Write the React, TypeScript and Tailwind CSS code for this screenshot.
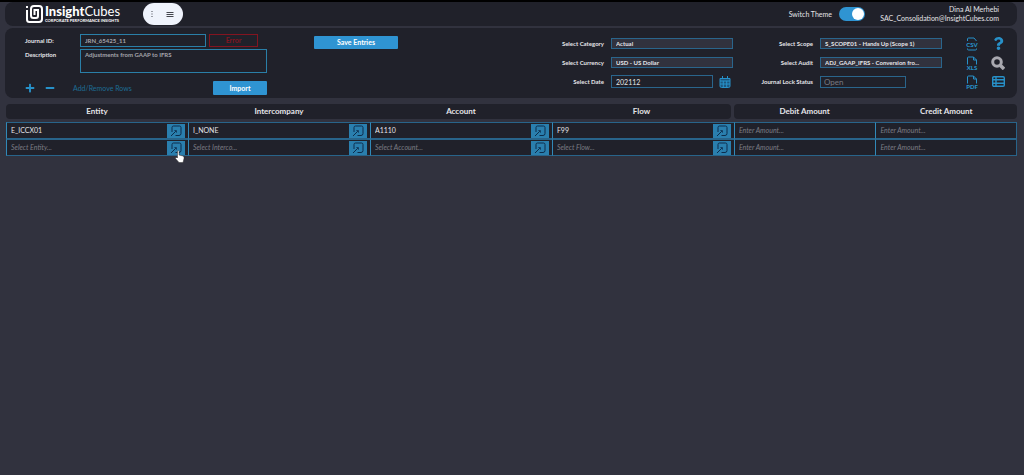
import { useState } from "react";
import type { ReactNode } from "react";
import { FaMinus, FaPlus, FaQuestion } from "react-icons/fa";

const lookupColumns = [
  { name: "Entity", placeholder: "Select Entity...", value: "E_ICCX01" },
  { name: "Intercompany", placeholder: "Select Interco...", value: "I_NONE" },
  { name: "Account", placeholder: "Select Account...", value: "A1110" },
  { name: "Flow", placeholder: "Select Flow...", value: "F99" },
];

const amountColumns = ["Debit Amount", "Credit Amount"];

function Logo() {
  return (
    <a href="#home" aria-label="InsightCubes" className="flex w-[96px] items-center gap-[2px] text-white">
      <svg viewBox="0 0 18 18" className="size-[18px] shrink-0" fill="none" stroke="currentColor">
        <path strokeWidth="2" d="M2 5v9.500q0 2.500 2.500 2.500H14q3 0 3-3V4q0-3-3-3H9Q6 1 6 4v6.500q0 2.500 2.500 2.500H11q2 0 2-2V5H9.500v5" />
        <path strokeWidth="2" d="M1 2h2" />
      </svg>
      <div className="flex flex-col">
        <span className="text-[13px] leading-[13px]">
          <b className="font-black">Insight</b>Cubes
        </span>
        <span className="text-[4px] leading-[5px] font-bold whitespace-nowrap">
          CORPORATE PERFORMANCE INSIGHTS
        </span>
      </div>
    </a>
  );
}

function LookupIcon() {
  return (
    <svg viewBox="0 0 12 12" className="size-3" fill="none" stroke="#0c2d4c">
      <path d="M2 7V2.500Q2 1 3.500 1H9.500q1.500 0 1.500 1.500v6q0 2-2 2H5.500" />
      <path d="M1 11l4.500-4.500" />
      <path fill="#0c2d4c" strokeWidth="0.500" d="M4.500 5.500h2v2z" />
    </svg>
  );
}

function FileIcon({ label }: { label: string }) {
  const isCsv = label === "CSV";
  return (
    <svg viewBox="0 0 12 14" className="h-[14px] w-3" fill="none" stroke="#2791c9">
      <path d={isCsv ? "M1.500 4V2q0-1 1-1h5.500l2.500 3" : "M1.500 8.500V2q0-1 1-1h5l3 3v4.500M7.500 1v3h3"} />
      {isCsv && <path d="M1.500 11.500v0.500q0 1 1 1h7q1 0 1-1v-0.500" />}
      <text
        x="6"
        y={isCsv ? 10 : 14}
        textAnchor="middle"
        fill="#2791c9"
        stroke="none"
        className="text-[6px] font-black"
      >
        {label}
      </text>
    </svg>
  );
}

function CalendarIcon() {
  return (
    <svg viewBox="0 0 12 12" className="size-3" fill="none" stroke="#2791c9">
      <path fill="#1d567d" d="M1 2.500h10v7.500q0 1.500-1.500 1.500h-7q-1.500 0-1.500-1.500z" />
      <path d="M1 5h10M1 8h10M4.300 5v6M7.700 5v6M3.500 0v3M8.500 0v3" />
    </svg>
  );
}

function SearchIcon() {
  return (
    <svg viewBox="0 0 14 14" className="size-[14px]" fill="none" stroke="#a9a9b0">
      <circle cx="6" cy="6" r="4.300" strokeWidth="3" />
      <path strokeWidth="3.500" d="M9.500 9.500l3.500 3.500" />
    </svg>
  );
}

function ListIcon() {
  return (
    <svg viewBox="0 0 13 11" className="h-[11px] w-[13px]" fill="none" stroke="#2791c9">
      <rect x="0.700" y="0.700" width="11.600" height="9.600" rx="1.200" strokeWidth="1.400" />
      <path strokeWidth="1.400" d="M1 3.800h11M1 7.200h11M4 1v9" />
    </svg>
  );
}

function Field({ label, id, children }: { label: string; id: string; children: ReactNode }) {
  return (
    <div className="flex h-[19px] items-center justify-end gap-[7px]">
      <label htmlFor={id} className="text-[6px] font-bold whitespace-nowrap">
        {label}
      </label>
      {children}
    </div>
  );
}

function SelectBox({ id, value }: { id: string; value: string }) {
  return (
    <select
      id={id}
      className="h-[11px] w-[122px] appearance-none border border-[#2a658c] bg-[#31323e] pl-1 text-[6px] leading-[9px] font-bold text-[#e4e4e8]"
    >
      <option>{value}</option>
    </select>
  );
}

function Pointer() {
  return (
    <svg viewBox="0 0 10 13" className="pointer-events-none absolute top-[10px] right-[3px] z-10 h-[13px] w-[10px]">
      <path
        fill="#fff"
        stroke="#333"
        strokeWidth="0.500"
        d="M2.500 1q1-1 1.500 0.500V5l4 1q1.500 0.500 1 2.500l-1 4H4L0.500 8.500Q0.500 7 2 7.500l0.500 0.500z"
      />
    </svg>
  );
}

export default function App() {
  const [light, setLight] = useState(true);

  return (
    <div className="min-h-screen border-t-2 border-black bg-[#31323e] pr-[7px] pl-[5px] font-[Lato,sans-serif] text-[#e4e4e8]">
      <header className="flex h-6 items-center rounded-lg bg-[#20212a] pr-[18px] pl-5">
        <Logo />
        <nav className="ml-[22px] flex h-[22px] w-10 items-center justify-between rounded-full bg-[#eff3fc] px-2 text-[#44464f]">
          <button aria-label="More" className="flex">
            <svg viewBox="0 0 2 8" className="h-2 w-[2px]" fill="currentColor">
              <path d="M0.500 1h1v1h-1zM0.500 3.500h1v1h-1zM0.500 6h1v1h-1z" />
            </svg>
          </button>
          <button aria-label="Menu" className="mr-px flex">
            <svg viewBox="0 0 8 7" className="h-[7px] w-2" stroke="currentColor">
              <path d="M0.500 1.500h7M0.500 3.500h7M0.500 5.500h7" />
            </svg>
          </button>
        </nav>
        <label htmlFor="theme" className="ml-auto text-[7px]">
          Switch Theme
        </label>
        <input
          id="theme"
          type="checkbox"
          role="switch"
          checked={light}
          onChange={() => setLight(!light)}
          className="ml-[7px] h-[14px] w-[26px] appearance-none rounded-full bg-[#2f94d2] p-px before:block before:size-3 before:rounded-full before:bg-white checked:before:ml-3"
        />
        <div className="w-[134px] text-right text-[7px] leading-[9px]">
          <p>Dina Al Merhebi</p>
          <p>SAC_Consolidation@InsightCubes.com</p>
        </div>
      </header>

      <section className="mt-[2px] flex h-[70px] rounded-lg bg-[#20212a] pr-3 pl-5">
        <div className="flex w-[242px] flex-col pt-[6px]">
          <div className="flex items-center">
            <label htmlFor="journal" className="w-[55px] text-[6px] font-bold">
              Journal ID:
            </label>
            <input
              id="journal"
              defaultValue="JRN_65425_11"
              className="h-[13px] w-[126px] border border-[#2a7fa8] px-1 text-[6px] font-bold text-[#a4a4aa]"
            />
            <button className="ml-[3px] h-[13px] w-[49px] border border-[#831420] text-[7px] leading-[11px] font-bold text-[#831420]">
              Error
            </button>
          </div>
          <div className="mt-[2px] flex items-start">
            <label htmlFor="description" className="w-[55px] text-[6px] leading-3 font-bold">
              Description
            </label>
            <textarea
              id="description"
              defaultValue="Adjustments from GAAP to IFRS"
              className="h-6 w-[187px] resize-none border border-[#2a7fa8] px-1 text-[6px] leading-[10px] font-bold text-[#a4a4aa]"
            />
          </div>
          <div className="mt-2 flex items-center">
            <button aria-label="Add row" className="text-[10px] text-[#2791c9]">
              <FaPlus />
            </button>
            <button aria-label="Remove row" className="ml-[10px] text-[10px] text-[#2791c9]">
              <FaMinus />
            </button>
            <span className="ml-[18px] text-[7px] text-[#1d6c94]">Add/Remove Rows</span>
            <button className="ml-auto h-[14px] w-[54px] rounded-[1px] bg-[#2f94d2] text-[7px] font-bold text-white">
              Import
            </button>
          </div>
        </div>

        <button className="mt-2 ml-[47px] h-[13px] w-[84px] rounded-[1px] bg-[#2f94d2] text-[7px] font-bold text-white">
          Save Entries
        </button>

        <div className="ml-auto pt-[6px]">
          <Field label="Select Category" id="category">
            <SelectBox id="category" value="Actual" />
          </Field>
          <Field label="Select Currency" id="currency">
            <SelectBox id="currency" value="USD - US Dollar" />
          </Field>
          <Field label="Select Date" id="date">
            <div className="flex w-[122px] items-center justify-between">
              <input
                id="date"
                defaultValue="202112"
                className="h-[13px] w-[102px] border border-[#2a658c] px-1 text-[7px]"
              />
              <button aria-label="Pick date" className="mr-[2px]">
                <CalendarIcon />
              </button>
            </div>
          </Field>
        </div>

        <div className="ml-6 w-[185px] pt-[6px]">
          <Field label="Select Scope" id="scope">
            <SelectBox id="scope" value="S_SCOPE01 - Hands Up (Scope 1)" />
          </Field>
          <Field label="Select Audit" id="audit">
            <SelectBox id="audit" value="ADJ_GAAP_IFRS - Conversion fro..." />
          </Field>
          <Field label="Journal Lock Status" id="lock">
            <div className="flex w-[122px]">
              <input
                id="lock"
                readOnly
                value="Open"
                className="h-3 w-[86px] border border-[#2a658c] px-[3px] text-[8px] text-[#777981]"
              />
            </div>
          </Field>
        </div>

        <div className="ml-[23px] grid auto-rows-[19px] grid-cols-2 place-items-center gap-x-3 pt-[6px]">
          <button aria-label="Export CSV">
            <FileIcon label="CSV" />
          </button>
          <button aria-label="Help" className="text-[13px] text-[#2791c9]">
            <FaQuestion />
          </button>
          <button aria-label="Export XLS">
            <FileIcon label="XLS" />
          </button>
          <button aria-label="Search">
            <SearchIcon />
          </button>
          <button aria-label="Export PDF">
            <FileIcon label="PDF" />
          </button>
          <button aria-label="List">
            <ListIcon />
          </button>
        </div>
      </section>

      <div className="mt-[6px] pl-px">
        <table className="w-full table-fixed border-separate border-spacing-0 text-[7px]">
          <colgroup>
            <col className="w-[18%]" />
            <col className="w-[18%]" />
            <col className="w-[18%]" />
            <col className="w-[18%]" />
            <col className="w-[14%]" />
            <col className="w-[14%]" />
          </colgroup>
          <thead>
            <tr className="text-[8px] leading-[14px]">
              {lookupColumns.map((column) => (
                <th key={column.name} className="group p-0 pb-[3px] font-bold nth-[4]:pr-[3px]">
                  <div className="h-[15px] bg-[#20212a] group-first:rounded-l group-nth-[4]:rounded-r">
                    {column.name}
                  </div>
                </th>
              ))}
              {amountColumns.map((name) => (
                <th key={name} className="group p-0 pb-[3px] font-bold">
                  <div className="h-[15px] bg-[#20212a] group-last:rounded-r group-nth-[5]:rounded-l">
                    {name}
                  </div>
                </th>
              ))}
            </tr>
          </thead>
          <tbody>
            {[0, 1].map((row) => (
              <tr key={row} className="h-[17px]">
                {lookupColumns.map((column) => (
                  <td
                    key={column.name}
                    className="relative border-y border-l border-[#28648a] border-l-[#3189b8] bg-[#20212a] p-0"
                  >
                    <div className="flex h-[15px] items-center pr-[3px] pl-1">
                      <input
                        aria-label={`${column.name} ${row + 1}`}
                        defaultValue={row === 0 ? column.value : ""}
                        placeholder={column.placeholder}
                        className="min-w-0 flex-1 placeholder:text-[#7b7c84] placeholder:italic"
                      />
                      <button
                        aria-label={`Look up ${column.name}`}
                        className="flex h-[14px] w-[18px] items-center justify-center bg-[#2a7fae] hover:bg-[#2672b8]"
                      >
                        <LookupIcon />
                      </button>
                    </div>
                    {row === 1 && column.name === "Entity" && <Pointer />}
                  </td>
                ))}
                {amountColumns.map((name) => (
                  <td
                    key={name}
                    className="border-y border-l border-[#28648a] border-l-[#3189b8] bg-[#20212a] p-0 last:border-r"
                  >
                    <input
                      aria-label={`${name} ${row + 1}`}
                      placeholder="Enter Amount..."
                      className="block w-full px-1 placeholder:text-[#7b7c84] placeholder:italic"
                    />
                  </td>
                ))}
              </tr>
            ))}
          </tbody>
        </table>
      </div>
    </div>
  );
}
